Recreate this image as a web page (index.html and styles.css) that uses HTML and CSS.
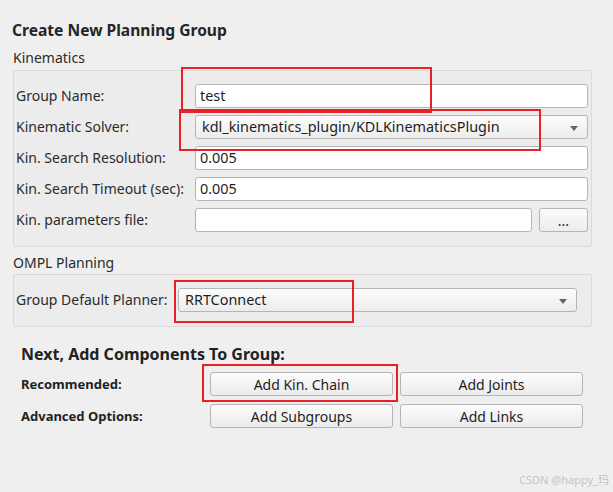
FILE: index.html
```html
<!DOCTYPE html>
<html lang="en">
<head>
    <meta charset="UTF-8">
    <title>Create New Planning Group</title>
    <link rel="stylesheet" href="styles.css">
</head>
<body>
    <div class="page">
        <h2 class="title">Create New Planning Group</h2>

        <!-- Kinematics -->
        <div class="section-label">Kinematics</div>
        <div class="group-box kin-box">
            <label>Group Name:</label>
            <div class="field">test</div>

            <label>Kinematic Solver:</label>
            <div class="combo">kdl_kinematics_plugin/KDLKinematicsPlugin<span class="arrow"></span></div>

            <label>Kin. Search Resolution:</label>
            <div class="field">0.005</div>

            <label>Kin. Search Timeout (sec):</label>
            <div class="field">0.005</div>

            <label>Kin. parameters file:</label>
            <div class="file-row">
                <div class="field"></div>
                <button class="btn dots">...</button>
            </div>
        </div>

        <!-- OMPL -->
        <div class="section-label ompl-label">OMPL Planning</div>
        <div class="group-box ompl-box">
            <label>Group Default Planner:</label>
            <div class="combo">RRTConnect<span class="arrow"></span></div>
        </div>

        <!-- Components -->
        <div class="components">
            <h3>Next, Add Components To Group:</h3>
            <div class="comp-grid">
                <span class="comp-label">Recommended:</span>
                <button class="btn">Add Kin. Chain</button>
                <button class="btn">Add Joints</button>
                <span class="comp-label">Advanced Options:</span>
                <button class="btn">Add Subgroups</button>
                <button class="btn">Add Links</button>
            </div>
        </div>

        <!-- red annotation marks -->
        <div class="mark mark-name"></div>
        <div class="mark mark-solver"></div>
        <div class="mark mark-planner"></div>
        <div class="mark mark-chain"></div>

        <div class="watermark">CSDN @happy_玛</div>
    </div>
</body>
</html>
```

FILE: styles.css
```css
body {
    margin: 0;
    background-color: #efefef;
    font-family: 'Noto Sans', 'Noto Sans CJK SC', sans-serif;
    color: #2b2b2b;
}

.page {
    position: relative;
    width: 613px;
    height: 492px;
    padding: 19px 21px 0 13px;
    box-sizing: border-box;
}

.title {
    margin: 0 0 0 -1px;
    font-size: 15.6px;
    font-weight: bold;
    line-height: 22px;
    color: #262626;
}

.section-label {
    font-size: 14px;
    line-height: 18px;
    margin-top: 8px;
}

.group-box {
    margin-top: 3px;
    border: 1px solid #dadada;
    border-radius: 2px;
    background-color: #ececec;
    display: grid;
    align-items: center;
}

.kin-box {
    grid-template-columns: 179px 1fr;
    row-gap: 7px;
    padding: 13px 3px 14px 2px;
}

.ompl-label {
    margin-top: 7px;
}

.ompl-box {
    margin-top: 2px;
    grid-template-columns: 162px 1fr;
    padding: 13px 14px 14px 2px;
}

.group-box label {
    font-size: 14px;
    line-height: 18px;
    white-space: nowrap;
}

.field,
.combo {
    height: 24px;
    box-sizing: border-box;
    border: 1px solid #b5b5b5;
    border-radius: 3px;
    background-color: #fff;
    font-size: 14.4px;
    line-height: 22px;
    padding: 0 4px;
    color: #1e1e1e;
}

.combo {
    position: relative;
    padding-left: 6px;
    background: linear-gradient(#fcfcfc, #ececec);
}

.arrow {
    position: absolute;
    right: 9px;
    top: 10px;
    border-left: 4px solid transparent;
    border-right: 4px solid transparent;
    border-top: 5px solid #666;
}

.file-row {
    display: flex;
    gap: 7px;
}

.file-row .field {
    flex: 1;
}

.btn {
    height: 24px;
    border: 1px solid #b5b5b5;
    border-radius: 3px;
    background: linear-gradient(#fbfbfb, #ececec);
    font-family: inherit;
    font-size: 14px;
    color: #1e1e1e;
    padding: 0;
}

.dots {
    width: 49px;
}

.components {
    padding-left: 8px;
    margin-top: 17px;
}

.components h3 {
    margin: 0;
    font-size: 16px;
    line-height: 20px;
    font-weight: bold;
    color: #222;
}

.comp-grid {
    display: grid;
    grid-template-columns: 182px 183px 183px;
    column-gap: 7px;
    row-gap: 8px;
    align-items: center;
    margin-top: 8px;
}

.comp-label {
    font-size: 13px;
    font-weight: bold;
    color: #222;
}

.mark {
    position: absolute;
    border: 2px solid #e8202a;
    box-sizing: border-box;
}

.mark-name { left: 181px; top: 67px; width: 251px; height: 46px; }
.mark-solver { left: 179px; top: 109px; width: 362px; height: 42px; }
.mark-planner { left: 174px; top: 280px; width: 180px; height: 43px; }
.mark-chain { left: 202px; top: 364px; width: 196px; height: 38px; }

.watermark {
    position: absolute;
    right: 4px;
    bottom: 5px;
    font-size: 11px;
    color: #c4c4c4;
}
```
